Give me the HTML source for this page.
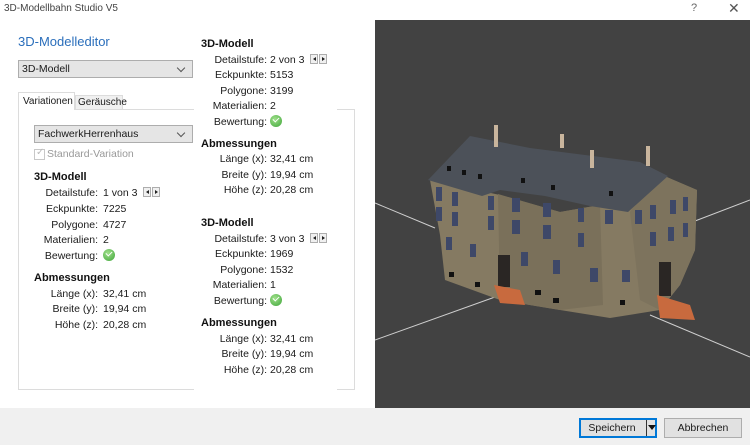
<!DOCTYPE html>
<html><head><meta charset="utf-8">
<style>
*{margin:0;padding:0;box-sizing:border-box}
body{width:750px;height:445px;overflow:hidden;background:#fff;font-family:"Liberation Sans",Arial,sans-serif;font-size:10.5px;color:#1a1a1a;position:relative}
.a{position:absolute;white-space:nowrap}
.h{font-weight:bold;font-size:11px;color:#111}
.r{position:absolute;white-space:nowrap;height:14px;line-height:14px}
.r .l{display:inline-block;text-align:right}
.r .v{position:absolute;top:0;white-space:nowrap}
.chk{display:inline-block;width:12px;height:12px;border-radius:50%;background:radial-gradient(circle at 40% 35%,#9fe08a,#3fa53a);vertical-align:-2px;position:relative}
.chk:after{content:"";position:absolute;left:3px;top:2px;width:5px;height:3px;border-left:1.5px solid #fff;border-bottom:1.5px solid #fff;transform:rotate(-45deg)}
.sp{display:inline-block;position:relative;width:18px;height:10px;margin-left:6px;vertical-align:-1px}
.sp i{position:absolute;top:0;width:8px;height:10px;border:1px solid #adadad;background:#f0f0f0}
.sp i:nth-child(1){left:0}.sp i:nth-child(2){left:9px}
.sp i:after{content:"";position:absolute;top:2px;border:2.5px solid transparent}
.sp i:nth-child(1):after{left:0;border-right:3px solid #222}
.sp i:nth-child(2):after{left:2px;border-left:3px solid #222}
.dd{position:absolute;background:#e5e5e5;border:1px solid #adadad;padding-left:3px;line-height:16px}
.dd:after{content:"";position:absolute;right:8px;top:4px;width:5px;height:5px;border-right:1px solid #555;border-bottom:1px solid #555;transform:rotate(45deg)}
.btn{position:absolute;background:#e1e1e1;border:1px solid #adadad;text-align:center;line-height:18px;font-size:10.5px}
</style></head><body>
<div class="a" style="left:4px;top:3px;font-size:10px;color:#444">3D-Modellbahn Studio V5</div>
<div class="a" style="left:691px;top:2px;font-size:11px;color:#666">?</div>
<div class="a" style="left:728px;top:0px;font-size:14px;color:#555">✕</div>
<div class="a" style="left:18px;top:34px;font-size:13px;color:#2a6ebb">3D-Modelleditor</div>
<div class="dd" style="left:18px;top:60px;width:175px;height:18px">3D-Modell</div>
<div class="a" style="left:18px;top:109px;width:337px;height:281px;border:1px solid #dcdcdc;background:#fff"></div>
<div class="a" style="left:75px;top:95px;width:48px;height:15px;border:1px solid #dcdcdc;background:#f0f0f0;padding-left:2px;line-height:13px;font-size:10px">Geräusche</div>
<div class="a" style="left:18px;top:92px;width:57px;height:18px;border:1px solid #dcdcdc;border-bottom:none;background:#fff;padding-left:4px;line-height:17px;font-size:10px">Variationen</div>
<div class="a" style="left:194px;top:20px;width:143px;height:370px;background:#fff"></div>
<div class="dd" style="left:34px;top:125px;width:159px;height:18px">FachwerkHerrenhaus</div>
<div class="a" style="left:34px;top:149px;width:11px;height:11px;border:1px solid #c8c8c8"></div>
<div class="a" style="left:36px;top:147px;color:#bbb;font-size:10px">✓</div>
<div class="a" style="left:47px;top:148px;color:#999">Standard-Variation</div>

<div class="a h" style="left:34px;top:171px">3D-Modell</div>
<div class="r" style="left:20px;top:186px"><span class="l" style="width:78px">Detailstufe:</span><span class="v" style="left:83px">1 von 3<span class="sp"><i></i><i></i></span></span></div>
<div class="r" style="left:20px;top:202px"><span class="l" style="width:78px">Eckpunkte:</span><span class="v" style="left:83px">7225</span></div>
<div class="r" style="left:20px;top:218px"><span class="l" style="width:78px">Polygone:</span><span class="v" style="left:83px">4727</span></div>
<div class="r" style="left:20px;top:233px"><span class="l" style="width:78px">Materialien:</span><span class="v" style="left:83px">2</span></div>
<div class="r" style="left:20px;top:249px"><span class="l" style="width:78px">Bewertung:</span><span class="v" style="left:83px"><span class="chk"></span></span></div>
<div class="a h" style="left:34px;top:272px">Abmessungen</div>
<div class="r" style="left:20px;top:287px"><span class="l" style="width:78px">Länge (x):</span><span class="v" style="left:83px">32,41 cm</span></div>
<div class="r" style="left:20px;top:302px"><span class="l" style="width:78px">Breite (y):</span><span class="v" style="left:83px">19,94 cm</span></div>
<div class="r" style="left:20px;top:318px"><span class="l" style="width:78px">Höhe (z):</span><span class="v" style="left:83px">20,28 cm</span></div>

<div class="a h" style="left:201px;top:38px">3D-Modell</div>
<div class="r" style="left:190px;top:53px"><span class="l" style="width:77px">Detailstufe:</span><span class="v" style="left:80px">2 von 3<span class="sp"><i></i><i></i></span></span></div>
<div class="r" style="left:190px;top:68px"><span class="l" style="width:77px">Eckpunkte:</span><span class="v" style="left:80px">5153</span></div>
<div class="r" style="left:190px;top:84px"><span class="l" style="width:77px">Polygone:</span><span class="v" style="left:80px">3199</span></div>
<div class="r" style="left:190px;top:99px"><span class="l" style="width:77px">Materialien:</span><span class="v" style="left:80px">2</span></div>
<div class="r" style="left:190px;top:115px"><span class="l" style="width:77px">Bewertung:</span><span class="v" style="left:80px"><span class="chk"></span></span></div>
<div class="a h" style="left:201px;top:138px">Abmessungen</div>
<div class="r" style="left:190px;top:152px"><span class="l" style="width:77px">Länge (x):</span><span class="v" style="left:80px">32,41 cm</span></div>
<div class="r" style="left:190px;top:168px"><span class="l" style="width:77px">Breite (y):</span><span class="v" style="left:80px">19,94 cm</span></div>
<div class="r" style="left:190px;top:183px"><span class="l" style="width:77px">Höhe (z):</span><span class="v" style="left:80px">20,28 cm</span></div>

<div class="a h" style="left:201px;top:217px">3D-Modell</div>
<div class="r" style="left:190px;top:232px"><span class="l" style="width:77px">Detailstufe:</span><span class="v" style="left:80px">3 von 3<span class="sp"><i></i><i></i></span></span></div>
<div class="r" style="left:190px;top:247px"><span class="l" style="width:77px">Eckpunkte:</span><span class="v" style="left:80px">1969</span></div>
<div class="r" style="left:190px;top:263px"><span class="l" style="width:77px">Polygone:</span><span class="v" style="left:80px">1532</span></div>
<div class="r" style="left:190px;top:278px"><span class="l" style="width:77px">Materialien:</span><span class="v" style="left:80px">1</span></div>
<div class="r" style="left:190px;top:294px"><span class="l" style="width:77px">Bewertung:</span><span class="v" style="left:80px"><span class="chk"></span></span></div>
<div class="a h" style="left:201px;top:317px">Abmessungen</div>
<div class="r" style="left:190px;top:332px"><span class="l" style="width:77px">Länge (x):</span><span class="v" style="left:80px">32,41 cm</span></div>
<div class="r" style="left:190px;top:347px"><span class="l" style="width:77px">Breite (y):</span><span class="v" style="left:80px">19,94 cm</span></div>
<div class="r" style="left:190px;top:363px"><span class="l" style="width:77px">Höhe (z):</span><span class="v" style="left:80px">20,28 cm</span></div>

<svg class="a" style="left:375px;top:20px" width="375" height="388" viewBox="375 20 375 388">
<rect x="375" y="20" width="375" height="388" fill="#424242"/>
<g stroke="#cfcfcf" stroke-width="1">
<line x1="375" y1="203" x2="435" y2="228"/><line x1="375" y1="340" x2="495" y2="297"/>
<line x1="695" y1="221" x2="750" y2="200"/><line x1="650" y1="315" x2="750" y2="357"/>
</g>
<polygon points="430,180 500,195 560,212 600,205 655,172 697,190 695,250 680,285 660,310 610,318 560,310 500,300 445,280 440,235" fill="#857a62"/>
<polygon points="498,194 560,212 600,205 603,305 560,310 500,300" fill="#7a705a"/>
<polygon points="655,172 697,190 695,250 680,285 660,310 640,300 630,212" fill="#7d735d"/>
<polygon points="428,180 470,136 530,148 640,162 668,176 628,212 590,206 545,196 500,190 482,196" fill="#4c5159"/>
<g fill="#3e4868">
<rect x="436" y="187" width="6" height="14"/><rect x="452" y="192" width="6" height="14"/><rect x="488" y="196" width="6" height="14"/>
<rect x="436" y="207" width="6" height="14"/><rect x="452" y="212" width="6" height="14"/><rect x="488" y="216" width="6" height="14"/>
<rect x="446" y="237" width="6" height="13"/><rect x="470" y="244" width="6" height="13"/>
<rect x="512" y="198" width="8" height="14"/><rect x="543" y="203" width="8" height="14"/><rect x="578" y="208" width="6" height="14"/>
<rect x="512" y="220" width="8" height="14"/><rect x="543" y="225" width="8" height="14"/><rect x="578" y="233" width="6" height="14"/>
<rect x="521" y="252" width="7" height="14"/><rect x="553" y="260" width="7" height="14"/>
<rect x="605" y="210" width="8" height="14"/><rect x="635" y="210" width="7" height="14"/><rect x="650" y="205" width="6" height="14"/><rect x="670" y="200" width="6" height="14"/><rect x="683" y="197" width="5" height="14"/>
<rect x="650" y="232" width="6" height="14"/><rect x="668" y="227" width="6" height="14"/><rect x="683" y="223" width="5" height="14"/>
<rect x="590" y="268" width="8" height="14"/><rect x="622" y="270" width="8" height="12"/>
</g>
<g fill="#2a2624"><rect x="498" y="255" width="12" height="32"/><rect x="659" y="262" width="12" height="34"/></g>
<g fill="#c86a3e"><polygon points="494,285 520,290 525,305 500,303"/><polygon points="657,295 690,305 695,320 660,318"/></g>
<g fill="#111"><rect x="449" y="272" width="5" height="5"/><rect x="475" y="282" width="5" height="5"/><rect x="535" y="290" width="6" height="5"/><rect x="553" y="298" width="6" height="5"/><rect x="620" y="300" width="5" height="5"/><rect x="447" y="166" width="4" height="5"/><rect x="462" y="170" width="4" height="5"/><rect x="478" y="174" width="4" height="5"/><rect x="521" y="178" width="4" height="5"/><rect x="551" y="185" width="4" height="5"/><rect x="609" y="191" width="4" height="5"/></g>
<g fill="#c9b59d"><rect x="494" y="125" width="4" height="22"/><rect x="560" y="134" width="4" height="14"/><rect x="590" y="150" width="4" height="18"/><rect x="646" y="146" width="4" height="20"/></g>
</svg>

<div class="a" style="left:0;top:408px;width:750px;height:37px;background:#f0f0f0"></div>
<div class="btn" style="left:579px;top:418px;width:78px;height:20px;border:2px solid #0078d7;line-height:16px;padding-right:12px">Speichern</div>
<div class="a" style="left:646px;top:420px;width:1px;height:16px;background:#333"></div>
<div class="a" style="left:648px;top:425px;border:4px solid transparent;border-top:5px solid #111"></div>
<div class="btn" style="left:664px;top:418px;width:78px;height:20px">Abbrechen</div>
</body></html>
